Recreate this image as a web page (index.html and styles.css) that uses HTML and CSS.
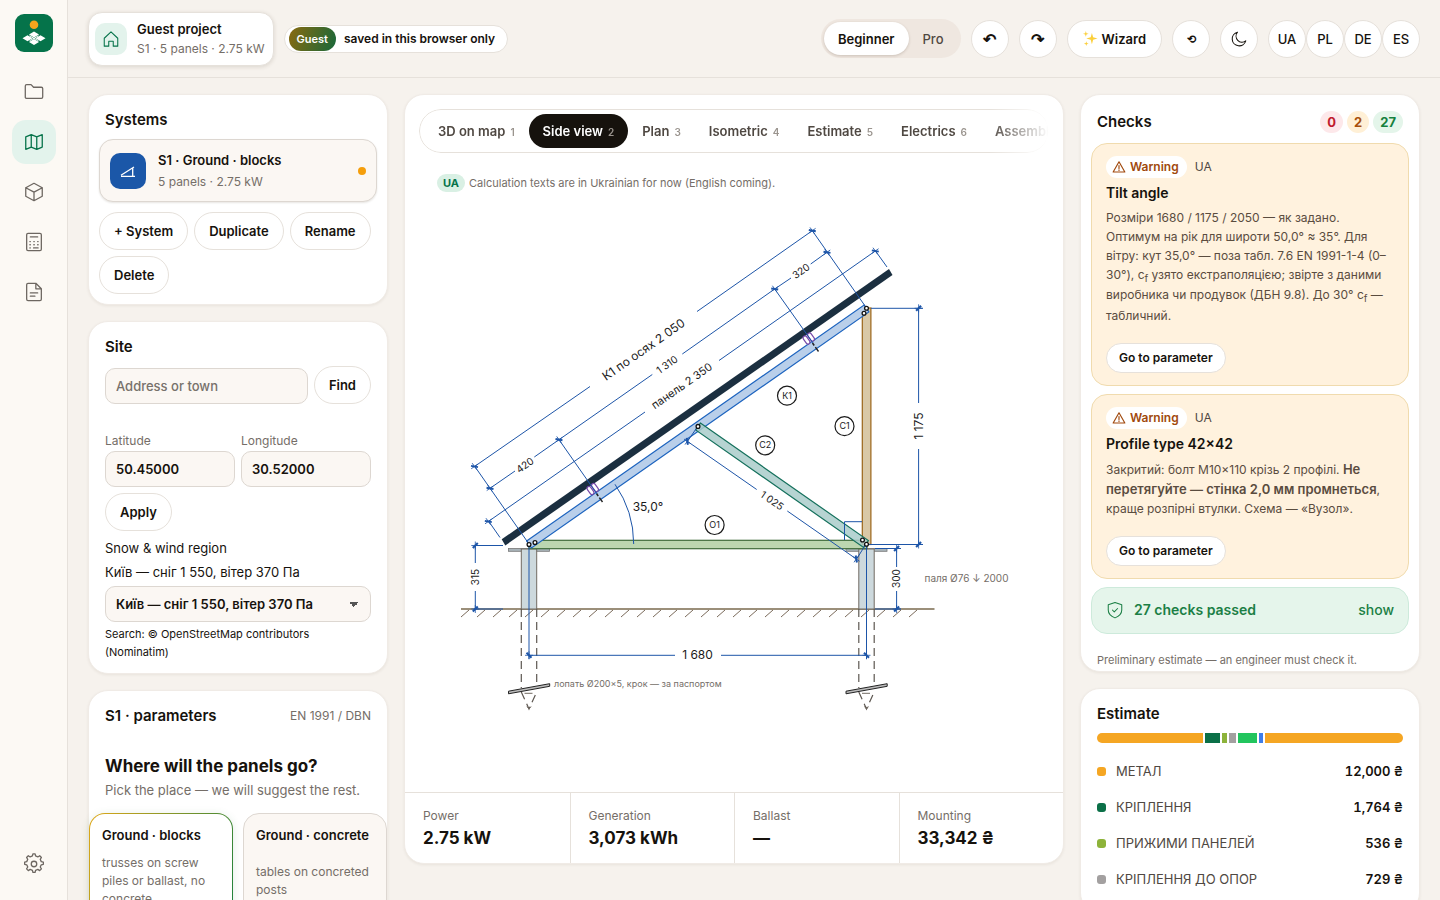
FILE: index.html
```
<!DOCTYPE html>
<html lang="en">
<head>
  <meta charset="UTF-8">
  <meta name="viewport" content="width=device-width, initial-scale=1.0">
  <title>Guest project</title>
  <link rel="stylesheet" href="styles.css">
</head>
<body>
<div class="app">

  <!-- Rail -->
  <nav class="rail" aria-label="Main">
    <a class="logo" href="#" aria-label="Home">
      <svg viewBox="0 0 38 38" width="38" height="38">
        <rect width="38" height="38" rx="9" fill="#05734a"/>
        <circle cx="19" cy="10.700" r="4.300" fill="#f5a51d"/>
        <path fill="#fff" d="M19 17.600l5 3-5 3-5-3zM12.500 21.300l5 3-5 3-5-3zM25.500 21.300l5 3-5 3-5-3zM19 25l5 3-5 3-5-3z"/>
        <path d="M14.500 21.800l9 5M23.500 21.800l-9 5" stroke="#fff" stroke-width="1"/>
      </svg>
    </a>
    <a class="rail-link" href="#" aria-label="Projects">
      <svg class="icon" viewBox="0 0 24 24"><path d="M2.500 18V5.500a1.500 1.500 0 0 1 1.500-1.500h4.800L11.500 6.800H20a1.500 1.500 0 0 1 1.500 1.500v9.200a1.500 1.500 0 0 1-1.500 1.500H4a1.500 1.500 0 0 1-1.500-1z"/></svg>
    </a>
    <a class="rail-link active" href="#" aria-label="Map">
      <svg class="icon" viewBox="0 0 24 24"><path d="M3 6.500L9 4l6 2.500L21 4v13.500L15 20l-6-2.500L3 20zM9 4v13.500M15 6.500V20"/></svg>
    </a>
    <a class="rail-link" href="#" aria-label="Model">
      <svg class="icon" viewBox="0 0 24 24"><path d="M12 2.500l9 4.800v9.400l-9 4.800-9-4.800V7.300zM3 7.300l9 4.900 9-4.900M12 12.200v9.300"/></svg>
    </a>
    <a class="rail-link" href="#" aria-label="Estimate">
      <svg class="icon" viewBox="0 0 24 24"><rect x="4" y="2.500" width="16" height="19" rx="1.500"/><path d="M8 6.500h8"/><path d="M7.500 11.500h.5M11.800 11.500h.5M16 11.500h.5M7.500 15h.5M11.800 15h.5M16 15h.5M7.500 18.500h.5M11.500 18.500h5"/></svg>
    </a>
    <a class="rail-link" href="#" aria-label="Documents">
      <svg class="icon" viewBox="0 0 24 24"><path d="M14 2.500H5.500A1.500 1.500 0 0 0 4 4v16a1.500 1.500 0 0 0 1.500 1.500h13A1.500 1.500 0 0 0 20 20V8.500zM14 2.500v6h6M8 13h8M8 16.500h5"/></svg>
    </a>
    <a class="rail-link rail-bottom" href="#" aria-label="Settings">
      <svg class="icon" viewBox="0 0 24 24"><circle cx="12" cy="12" r="3"/><path d="M10.300 3.200L10.800 1h2.400l.5 2.200 2.500 1.100 2-1.300 1.900 1.900-1.300 2 1.100 2.500 2.300.5v2.500l-2.300.5-1.100 2.400 1.300 2-1.900 1.900-2-1.300-2.500 1.100-.5 2.200h-2.400l-.5-2.200-2.500-1.100-2 1.300-1.900-1.900 1.300-2-1.100-2.400-2.300-.5V9.900l2.300-.5 1.100-2.500-1.300-2L5.800 3l2 1.300z"/></svg>
    </a>
  </nav>

  <div class="main">
    <!-- Top bar -->
    <header class="topbar">
      <button class="project">
        <span class="project-icon">
          <svg class="icon icon-m" viewBox="0 0 24 24"><path d="M3 11l9-8.500 9 8.500v10.500h-6V15H9v6.500H3z"/></svg>
        </span>
        <span class="project-text">
          <strong>Guest project</strong>
          <small>S1 · 5 panels · 2.75 kW</small>
        </span>
      </button>
      <div class="guest"><span class="guest-tag">Guest</span>saved in this browser only</div>

      <div class="tools">
        <div class="segment">
          <button class="on">Beginner</button>
          <button>Pro</button>
        </div>
        <button class="btn round arrow" aria-label="Undo">↶</button>
        <button class="btn round arrow" aria-label="Redo">↷</button>
        <button class="btn wizard">
          <svg viewBox="0 0 16 16" width="15" height="15" fill="#fbcf3b"><path d="M9.500 2l1.300 4.700L15.500 8l-4.700 1.300L9.500 14 8.200 9.300 3.500 8l4.700-1.300zM3 0l.7 2.300L6 3l-2.300.7L3 6l-.7-2.300L0 3l2.300-.7zM3.500 11l.6 1.900 1.900.6-1.900.6-.6 1.900-.6-1.900-1.900-.6 1.900-.6z"/></svg>Wizard
        </button>
        <button class="btn round tiny" aria-label="Reset view">⟲</button>
        <button class="btn round" aria-label="Dark theme">
          <svg class="icon icon-m" viewBox="0 0 24 24"><path d="M10 3A9.200 9.200 0 1 0 21 14.500 8 8 0 0 1 10 3z"/></svg>
        </button>
        <div class="langs">
          <button class="btn round">UA</button>
          <button class="btn round">PL</button>
          <button class="btn round">DE</button>
          <button class="btn round">ES</button>
        </div>
      </div>
    </header>

    <div class="columns">
      <!-- Left column -->
      <aside class="col">
        <section class="card systems">
          <h2>Systems</h2>
          <button class="system">
            <span class="system-icon">
              <svg viewBox="0 0 20 20" width="20" height="20" fill="none" stroke="#fff" stroke-width="1.300"><path d="M3 14.300L16 6M3 15.300h14M14.700 7v8"/></svg>
            </span>
            <span class="system-text">
              <strong>S1 · Ground · blocks</strong>
              <small>5 panels · 2.75 kW</small>
            </span>
            <span class="status-dot"></span>
          </button>
          <div class="actions">
            <button class="btn">+ System</button>
            <button class="btn">Duplicate</button>
            <button class="btn">Rename</button>
            <button class="btn">Delete</button>
          </div>
        </section>

        <section class="card site">
          <h2>Site</h2>
          <div class="search">
            <input class="field" type="text" placeholder="Address or town" aria-label="Address or town">
            <button class="btn">Find</button>
          </div>
          <div class="coords">
            <label>Latitude<input class="field" type="text" value="50.45000"></label>
            <label>Longitude<input class="field" type="text" value="30.52000"></label>
          </div>
          <button class="btn">Apply</button>
          <label class="region-label" for="region">Snow &amp; wind region</label>
          <p class="region-value">Київ — сніг 1 550, вітер 370 Па</p>
          <select class="field" id="region">
            <option>Київ — сніг 1 550, вітер 370 Па</option>
          </select>
          <p class="credit">Search: © OpenStreetMap contributors (Nominatim)</p>
        </section>

        <section class="card params">
          <div class="params-head"><h2>S1 · parameters</h2><span>EN 1991 / DBN</span></div>
          <h3>Where will the panels go?</h3>
          <p class="hint">Pick the place — we will suggest the rest.</p>
          <div class="places">
            <button class="place chosen"><strong>Ground · blocks</strong><span>trusses on screw piles or ballast, no concrete</span></button>
            <button class="place"><strong>Ground · concrete</strong><span>tables on concreted posts</span></button>
          </div>
        </section>
      </aside>

      <!-- Drawing -->
      <main class="card viewer">
        <div class="tabs" role="tablist">
          <button role="tab">3D on map<small>1</small></button>
          <button role="tab" class="on" aria-selected="true">Side view<small>2</small></button>
          <button role="tab">Plan<small>3</small></button>
          <button role="tab">Isometric<small>4</small></button>
          <button role="tab">Estimate<small>5</small></button>
          <button role="tab">Electrics<small>6</small></button>
          <button role="tab">Assembly<small>7</small></button>
        </div>
        <p class="note"><span class="note-tag">UA</span>Calculation texts are in Ukrainian for now (English coming).</p>

        <svg class="drawing" viewBox="405 200 658 592">
          <defs>
            <marker id="tick" viewBox="-5 -5 10 10" markerWidth="10" markerHeight="10" markerUnits="userSpaceOnUse" orient="auto">
              <path d="M-4 0H4M0-4V4" stroke="#1d55a8" stroke-width=".8"/>
              <path d="M-2.500-2.500l5 5" stroke="#1d55a8" stroke-width="2"/>
            </marker>
          </defs>

          <!-- ground -->
          <path class="ground" d="M461 609H934.500"/>
          <path class="hatch" d="M469 610l-8 7m24-7l-8 7m24-7l-8 7m24-7l-8 7m24-7l-8 7m24-7l-8 7m24-7l-8 7m24-7l-8 7m24-7l-8 7m24-7l-8 7m24-7l-8 7m24-7l-8 7m24-7l-8 7m24-7l-8 7m24-7l-8 7m24-7l-8 7m24-7l-8 7m24-7l-8 7m24-7l-8 7m24-7l-8 7m24-7l-8 7m24-7l-8 7m24-7l-8 7m24-7l-8 7m24-7l-8 7m24-7l-8 7m24-7l-8 7m24-7l-8 7m24-7l-8 7"/>

          <!-- screw piles -->
          <g id="pile">
            <rect x="508.500" y="548.500" width="41" height="2.800" fill="#a9b4ba" stroke="#777" stroke-width=".8"/>
            <rect x="521.300" y="549" width="15.400" height="60" fill="#cdd9dd" stroke="#716a62"/>
            <path class="buried" d="M521.300 609V688M536.700 609V688M521.300 692L529 709L536.700 692"/>
            <path d="M524.500 693.300h8M527 706.500l2 2.500 2-2.500" fill="none" stroke="#716a62"/>
            <path d="M508.500 691.200L549.700 683.700V686.300L508.500 693.800z" fill="#bbb" stroke="#222"/>
          </g>
          <use href="#pile" x="337.500"/>

          <!-- frame -->
          <rect x="529" y="540.300" width="338" height="8.400" fill="#bcd6b0" stroke="#3f6b3a" stroke-width="1.200"/>
          <rect x="862.300" y="308" width="8.600" height="236.500" fill="#d9c8a6" stroke="#9a6418" stroke-width="1.200"/>
          <path d="M526.600 541L864.100 305L868.900 311.900L531.400 547.900z" fill="#b9cfea" stroke="#1d64bf" stroke-width="1.200"/>
          <path d="M700.400 423.100L868.400 540.600L863.600 547.400L695.600 429.900z" fill="#a9cdca" fill-opacity=".85" stroke="#14705c" stroke-width="1.200"/>
          <path d="M501.700 539.300L889 269L892.500 275L505.300 545.500z" fill="#1b2f40"/>

          <!-- clamps -->
          <g id="clamp" fill="#fff" stroke="#7649a8" stroke-width="1.200">
            <rect x="588.500" y="486" width="4" height="9" rx="2" transform="rotate(-35 590.500 490.500)"/>
            <rect x="593" y="483" width="4" height="9" rx="2" transform="rotate(-35 595 487.500)"/>
            <path d="M596.500 493.500L602.500 502" stroke="#222" stroke-width="1.500" stroke-dasharray="3 2 5 0"/>
          </g>
          <use href="#clamp" x="216" y="-150.500"/>

          <!-- extension lines -->
          <path class="dim" d="M529 544L474.500 466M866.500 308L812.300 230.700M559 439.700L597 494M774.700 289L813 343M488.300 520.700L500 537.500M875.300 250.700L887 267M871 308.300H923M868 544.500H923M475 545.500H503M475 609H503M875 548.500H901M875 609H901M529 544V659M866.500 544V659M698 426L687 442M866 544L856 560M844.500 540V521.700H862"/>
          <path class="dim" d="M615 484.300A105 105 0 0 1 633.700 544"/>

          <!-- dimension lines -->
          <g class="dim">
            <path marker-start="url(#tick)" d="M474.500 466.500L590 386.500"/>
            <path marker-end="url(#tick)" d="M697 311.500L812.300 230.700"/>
            <path marker-start="url(#tick)" d="M490 488.300L515 471"/>
            <path marker-end="url(#tick)" d="M534.300 457L559 439.700"/>
            <path d="M559 439.700L652.300 374.500"/>
            <path marker-end="url(#tick)" d="M682.300 354L774.700 289"/>
            <path d="M774.700 289L791 278"/>
            <path marker-end="url(#tick)" d="M810.700 264L827 252.300"/>
            <path marker-start="url(#tick)" d="M488.300 521.500L645 412"/>
            <path marker-end="url(#tick)" d="M719 360.500L875.300 251"/>
            <path marker-start="url(#tick)" d="M918.600 308.300V403"/>
            <path marker-end="url(#tick)" d="M918.600 449V544.500"/>
            <path marker-start="url(#tick)" d="M475.300 545.500V563"/>
            <path marker-end="url(#tick)" d="M475.300 591V609"/>
            <path marker-start="url(#tick)" d="M896.600 548.500V567"/>
            <path marker-end="url(#tick)" d="M896.600 591V609"/>
            <path marker-start="url(#tick)" d="M529 655.300H675"/>
            <path marker-end="url(#tick)" d="M721 655.300H866.500"/>
            <path marker-start="url(#tick)" d="M687.300 441.300L756.700 489.500"/>
            <path marker-end="url(#tick)" d="M787.300 511L856.300 559"/>
          </g>

          <!-- bolts -->
          <g fill="#fff" stroke="#111" stroke-width="1.300">
            <circle cx="529" cy="544.500" r="1.900"/><circle cx="535" cy="542.500" r="1.900"/>
            <circle cx="866.500" cy="308.300" r="1.900"/><circle cx="864" cy="313.300" r="1.900"/>
            <circle cx="866.500" cy="544.300" r="1.900"/><circle cx="862.500" cy="540" r="1.900"/>
            <circle cx="698" cy="426.400" r="1.900"/>
          </g>

          <!-- part marks -->
          <g fill="#fff" stroke="#1a1a1a" stroke-width="1.200">
            <circle cx="787" cy="395.700" r="9.500"/><circle cx="844.500" cy="426.200" r="9.500"/>
            <circle cx="765.200" cy="445.300" r="9.500"/><circle cx="714.600" cy="525" r="9.500"/>
          </g>
          <g class="mark">
            <text x="787" y="399">К1</text><text x="844.500" y="429">С1</text>
            <text x="765.200" y="448">С2</text><text x="714.600" y="528">О1</text>
          </g>

          <!-- sizes -->
          <g class="size-l">
            <text transform="translate(646 353) rotate(-35)">К1 по осях 2 050</text>
            <text transform="translate(923 426) rotate(-90)">1 175</text>
            <text x="697.500" y="659">1 680</text>
            <text x="648" y="511">35,0°</text>
          </g>
          <g class="size-m">
            <text transform="translate(684 389) rotate(-35)">панель 2 350</text>
          </g>
          <g class="size-s">
            <text transform="translate(669 367.500) rotate(-35)">1 310</text>
            <text transform="translate(527 468) rotate(-35)">420</text>
            <text transform="translate(803 274) rotate(-35)">320</text>
            <text transform="translate(770 503.500) rotate(35)">1 025</text>
            <text transform="translate(479 577) rotate(-90)">315</text>
            <text transform="translate(900 578.500) rotate(-90)">300</text>
          </g>
          <text class="remark" x="924.500" y="582">паля Ø76 ↓ 2000</text>
          <text class="remark small" x="554" y="687">лопать Ø200×5, крок — за паспортом</text>
        </svg>

        <dl class="stats">
          <div><dt>Power</dt><dd>2.75 kW</dd></div>
          <div><dt>Generation</dt><dd>3,073 kWh</dd></div>
          <div><dt>Ballast</dt><dd>—</dd></div>
          <div><dt>Mounting</dt><dd>33,342 ₴</dd></div>
        </dl>
      </main>

      <!-- Right column -->
      <aside class="col">
        <section class="card checks">
          <div class="checks-head">
            <h2>Checks</h2>
            <span class="count red">0</span><span class="count amber">2</span><span class="count green">27</span>
          </div>
          <article class="warning">
            <div class="warning-head">
              <span class="warning-tag"><svg class="icon icon-s" viewBox="0 0 24 24"><path d="M12 3l10 17.500H2zM12 9.500v5M12 17v1"/></svg>Warning</span>UA
            </div>
            <h3>Tilt angle</h3>
            <p>Розміри 1680 / 1175 / 2050 — як задано. Оптимум на рік для широти 50,0° ≈ 35°. Для вітру: кут 35,0° — поза табл. 7.6 EN 1991-1-4 (0–30°), c<sub>f</sub> узято екстраполяцією; звірте з даними виробника чи продувок (ДБН 9.8). До 30° c<sub>f</sub> — табличний.</p>
            <button class="btn btn-small">Go to parameter</button>
          </article>
          <article class="warning">
            <div class="warning-head">
              <span class="warning-tag"><svg class="icon icon-s" viewBox="0 0 24 24"><path d="M12 3l10 17.500H2zM12 9.500v5M12 17v1"/></svg>Warning</span>UA
            </div>
            <h3>Profile type 42×42</h3>
            <p>Закритий: болт М10×110 крізь 2 профілі. <b>Не перетягуйте — стінка 2,0 мм промнеться</b>, краще розпірні втулки. Схема — «Вузол».</p>
            <button class="btn btn-small">Go to parameter</button>
          </article>
          <button class="passed">
            <svg class="icon icon-m" viewBox="0 0 24 24"><path d="M12 2l9 3v7c0 5-4 8.500-9 10.500C7 20.500 3 17 3 12V5zM8.500 12l2.500 2.500 4.500-4.500"/></svg>
            27 checks passed<span>show</span>
          </button>
          <p class="disclaimer">Preliminary estimate — an engineer must check it.</p>
        </section>

        <section class="card estimate">
          <h2>Estimate</h2>
          <div class="bar">
            <i class="c-metal" style="flex-grow: 106"></i>
            <i class="c-fix" style="flex-grow: 15"></i>
            <i class="c-clamp" style="flex-grow: 5"></i>
            <i class="c-support" style="flex-grow: 7"></i>
            <i class="c-cable" style="flex-grow: 19"></i>
            <i class="c-other" style="flex-grow: 4"></i>
            <i class="c-metal" style="flex-grow: 138"></i>
          </div>
          <ul>
            <li><i class="c-metal"></i>МЕТАЛ<b>12,000 ₴</b></li>
            <li><i class="c-fix"></i>КРІПЛЕННЯ<b>1,764 ₴</b></li>
            <li><i class="c-clamp"></i>ПРИЖИМИ ПАНЕЛЕЙ<b>536 ₴</b></li>
            <li><i class="c-support"></i>КРІПЛЕННЯ ДО ОПОР<b>729 ₴</b></li>
          </ul>
        </section>
      </aside>
    </div>
  </div>
</div>
</body>
</html>
```

FILE: styles.css
```
:root {
  --bg: #f6f2ed;
  --rail: #fcf9f4;
  --card: #ffffff;
  --soft: #fbf7f3;
  --ink: #16120d;
  --ink-2: #4f4842;
  --muted: #756e68;
  --border: #e6e1db;
  --green: #06734a;
  --mint: #e3f3ec;
  --amber: #f5a623;
}

* {
  box-sizing: border-box;
}

body {
  margin: 0;
  background: var(--bg);
  color: var(--ink);
  font-family: Inter, "Noto Sans", sans-serif;
  font-size: 13px;
  line-height: 18px;
}

h2, h3, p, dl, dd, ul {
  margin: 0;
  padding: 0;
}

button, input, select {
  font: inherit;
  color: inherit;
}

button {
  cursor: pointer;
}

h2 {
  font-size: 15px;
  line-height: 20px;
  font-weight: 600;
}

strong {
  font-weight: 600;
}

.app {
  display: flex;
  height: 100vh;
  overflow: hidden;
}

.icon {
  width: 22px;
  height: 22px;
  fill: none;
  stroke: currentColor;
  stroke-width: 1.4;
  stroke-linejoin: round;
  stroke-linecap: round;
}

.icon-m {
  width: 18px;
  height: 18px;
}

.icon-s {
  width: 14px;
  height: 14px;
  stroke-width: 2;
}

/* Rail */
.rail {
  width: 68px;
  flex: none;
  display: flex;
  flex-direction: column;
  align-items: center;
  gap: 6px;
  padding: 14px 0;
  background: var(--rail);
  border-right: 1px solid var(--border);
}

.logo {
  height: 50px;
}

.rail-link {
  width: 44px;
  height: 44px;
  display: flex;
  align-items: center;
  justify-content: center;
  border-radius: 14px;
  color: #6d6761;
}

.rail-link.active {
  background: var(--mint);
  color: var(--green);
}

.rail-bottom {
  margin-top: auto;
}

.main {
  flex: 1;
  min-width: 0;
  display: flex;
  flex-direction: column;
}

/* Top bar */
.topbar {
  height: 78px;
  flex: none;
  display: flex;
  align-items: center;
  padding: 0 20px;
  gap: 10px;
  border-bottom: 1px solid var(--border);
}

.project {
  display: flex;
  align-items: center;
  gap: 10px;
  height: 54px;
  padding: 0 8px 0 6px;
  border: 1px solid var(--border);
  border-radius: 14px;
  background: var(--card);
  box-shadow: 0 1px 4px rgba(60, 40, 20, .14);
  text-align: left;
}

.project-icon {
  width: 32px;
  height: 32px;
  display: flex;
  align-items: center;
  justify-content: center;
  border-radius: 10px;
  background: var(--mint);
  color: var(--green);
}

.project-text, .system-text {
  display: flex;
  flex-direction: column;
}

.project small, .system small {
  font-size: 12px;
  color: var(--muted);
}

.project-text {
  line-height: 19px;
}

.guest {
  display: flex;
  align-items: center;
  gap: 8px;
  height: 28px;
  padding: 0 12px 0 4px;
  border: 1px solid var(--border);
  border-radius: 14px;
  background: var(--card);
  font-size: 12px;
  font-weight: 600;
}

.guest-tag {
  padding: 3px 8px;
  border-radius: 12px;
  background: linear-gradient(110deg, #8a6a10, #17683a);
  color: #fff;
  font-size: 11px;
}

.tools {
  margin-left: auto;
  display: flex;
  align-items: center;
  gap: 10px;
}

.segment {
  display: flex;
  padding: 3px;
  border-radius: 20px;
  background: #efe7e0;
}

.segment button {
  height: 33px;
  padding: 0 14px;
  border: 0;
  border-radius: 17px;
  background: none;
  font-size: 13px;
  font-weight: 500;
  color: var(--ink-2);
}

.segment .on {
  background: var(--card);
  color: var(--ink);
  font-weight: 600;
  box-shadow: 0 1px 3px rgba(60, 40, 20, .2);
}

.btn {
  height: 38px;
  padding: 0 14px;
  border: 1px solid var(--border);
  border-radius: 19px;
  background: var(--card);
  font-size: 13px;
  font-weight: 600;
  white-space: nowrap;
}

.round {
  width: 38px;
  padding: 0;
  display: inline-flex;
  align-items: center;
  justify-content: center;
}

.arrow {
  font-size: 16px;
}

.tiny {
  font-size: 11px;
}

.wizard {
  display: flex;
  align-items: center;
  gap: 4px;
  padding: 0 15px;
}

.langs {
  display: flex;
}

.langs .btn {
  font-weight: 500;
}

/* Columns */
.columns {
  flex: 1;
  min-height: 0;
  display: grid;
  grid-template-columns: 300px minmax(0, 1fr) 340px;
  gap: 16px;
  padding: 16px 20px 0;
}

.col {
  display: flex;
  flex-direction: column;
  gap: 16px;
  min-height: 0;
  overflow: visible;
}

.card {
  flex: none;
  border: 1px solid #f0ebe6;
  border-radius: 20px;
  background: var(--card);
  box-shadow: 0 1px 3px rgba(60, 40, 20, .07);
}

.systems {
  padding: 15px 10px 10px;
}

.systems h2 {
  padding: 0 6px;
}

.system {
  width: 100%;
  display: flex;
  align-items: center;
  gap: 12px;
  height: 63px;
  margin: 9px 0 10px;
  padding: 0 10px;
  border: 1px solid #ddd7d1;
  border-radius: 14px;
  background: var(--soft);
  box-shadow: 0 1px 2px rgba(60, 40, 20, .12);
  text-align: left;
}

.system-icon {
  width: 36px;
  height: 36px;
  display: flex;
  align-items: center;
  justify-content: center;
  border-radius: 10px;
  background: #1b57a8;
}

.system-text {
  gap: 4px;
}

.status-dot {
  width: 8px;
  height: 8px;
  margin-left: auto;
  border-radius: 50%;
  background: #f59e0b;
}

.actions {
  display: flex;
  flex-wrap: wrap;
  gap: 6px;
}

/* Site */
.site {
  padding: 15px 16px 12px;
}

.field {
  width: 100%;
  height: 36px;
  padding: 0 10px;
  border: 1px solid #ddd7d1;
  border-radius: 10px;
  background: var(--soft);
  font-size: 13px;
  font-weight: 600;
}

.field::placeholder {
  color: #77716b;
  font-weight: 500;
}

.search {
  display: flex;
  align-items: flex-end;
  gap: 6px;
  margin: 9px 0 27px;
}

.coords {
  display: flex;
  gap: 6px;
  margin-bottom: 6px;
}

.coords label {
  flex: 1;
  font-size: 12px;
  line-height: 20px;
  color: var(--muted);
}

.coords .field {
  color: var(--ink);
}

.region-label {
  display: block;
  margin: 8px 0 6px;
}

.region-value {
  margin-bottom: 5px;
}

select.field {
  appearance: none;
  background-image: linear-gradient(45deg, transparent 50%, #555 50%), linear-gradient(-45deg, transparent 50%, #555 50%);
  background-size: 5px 5px;
  background-position: right 16px center, right 11px center;
  background-repeat: no-repeat;
}

.credit {
  margin-top: 3px;
  font-size: 11px;
}

/* Parameters */
.params-head {
  display: flex;
  align-items: center;
  justify-content: space-between;
  padding: 15px 16px 0;
}

.params-head span {
  font-size: 12px;
  color: var(--muted);
}

.params h3 {
  margin: 28px 16px 0;
  font-size: 17px;
  line-height: 24px;
}

.hint {
  margin: 3px 16px 14px;
  color: var(--muted);
}

.places {
  display: grid;
  grid-template-columns: 1fr 1fr;
  gap: 10px;
}

.place {
  display: flex;
  flex-direction: column;
  height: 118px;
  padding: 12px;
  border: 1px solid #ddd7d1;
  border-radius: 16px;
  background: var(--soft);
  text-align: left;
}

.place strong {
  white-space: nowrap;
}

.place span {
  margin-top: 10px;
  height: 54px;
  display: flex;
  align-items: center;
  font-size: 12px;
  color: var(--muted);
}

.place.chosen {
  border-color: transparent;
  background: linear-gradient(#fff, #fff) padding-box, linear-gradient(110deg, #e0a818, #17803f) border-box;
  box-shadow: 0 2px 10px rgba(40, 110, 60, .14);
}

/* Viewer */
.viewer {
  display: flex;
  flex-direction: column;
  min-width: 0;
  height: calc(100% - 36px);
  overflow: hidden;
}

.tabs {
  display: flex;
  flex: none;
  margin: 14px 14px 0;
  padding: 4px;
  border: 1px solid var(--border);
  border-radius: 22px;
  overflow: hidden;
  -webkit-mask-image: linear-gradient(90deg, #000 calc(100% - 60px), transparent);
  mask-image: linear-gradient(90deg, #000 calc(100% - 60px), transparent);
}

.tabs button {
  flex: none;
  height: 34px;
  padding: 0 14px;
  border: 0;
  border-radius: 17px;
  background: none;
  font-size: 13px;
  font-weight: 600;
  color: var(--ink-2);
}

.tabs small {
  margin-left: 5px;
  font-size: 10px;
  color: #9a948e;
}

.tabs .on {
  background: var(--ink);
  color: #fff;
}

.note {
  flex: none;
  margin: 21px 32px 8px;
  font-size: 11px;
  color: var(--muted);
}

.note-tag {
  margin-right: 4px;
  padding: 2px 6px;
  border-radius: 9px;
  background: #d9f0e4;
  color: var(--green);
  font-weight: 700;
}

.drawing {
  flex: 1;
  min-height: 0;
  width: 100%;
}

.dim {
  fill: none;
  stroke: #1d55a8;
  stroke-width: 1;
}

.ground {
  stroke: #7a6a4e;
  stroke-width: 1.6;
}

.hatch {
  fill: none;
  stroke: #7a6a5a;
  stroke-width: 1;
}

.buried {
  fill: none;
  stroke: #5d5751;
  stroke-width: 1.2;
  stroke-dasharray: 8 5;
}

.mark, .size-l, .size-m, .size-s {
  fill: #1a1a1a;
  text-anchor: middle;
}

.mark {
  font-size: 9px;
}

.size-l {
  font-size: 12px;
}

.size-m {
  font-size: 11px;
}

.size-s {
  font-size: 10px;
}

.remark {
  font-size: 10px;
  fill: var(--muted);
}

.remark.small {
  font-size: 9px;
}

.stats {
  flex: none;
  display: grid;
  grid-template-columns: repeat(4, 1fr);
  border-top: 1px solid var(--border);
}

.stats div {
  padding: 14px 18px 12px;
}

.stats div + div {
  border-left: 1px solid var(--border);
}

.stats dt {
  font-size: 12px;
  color: var(--muted);
}

.stats dd {
  font-size: 17px;
  line-height: 26px;
  font-weight: 700;
}

/* Checks */
.checks {
  height: 578px;
  padding: 16px 10px 0;
  overflow: hidden;
}

.checks-head {
  display: flex;
  align-items: center;
  gap: 4px;
  padding: 0 6px;
  margin-bottom: 10px;
}

.checks-head h2 {
  margin-right: auto;
}

.count {
  padding: 2px 7px;
  border-radius: 11px;
  font-weight: 700;
}

.red {
  background: #fde8ea;
  color: #c01b2e;
}

.amber {
  background: #fff0d6;
  color: #a8500c;
}

.green {
  background: #e4f5ea;
  color: #15803d;
}

.warning {
  margin-bottom: 8px;
  padding: 12px 14px;
  border: 1px solid #f0dbae;
  border-radius: 16px;
  background: #fff2de;
}

.warning-head {
  display: flex;
  align-items: center;
  gap: 8px;
  font-size: 12px;
  color: var(--ink-2);
}

.warning-tag {
  display: flex;
  align-items: center;
  gap: 4px;
  height: 22px;
  padding: 0 8px 0 6px;
  border-radius: 11px;
  background: #fff;
  font-weight: 600;
  color: #a1490d;
}

.warning h3 {
  margin: 5px 0;
  font-size: 14px;
  line-height: 20px;
  font-weight: 600;
}

.warning p {
  margin-bottom: 18px;
  font-size: 12px;
  line-height: 19px;
  color: #5a4c3f;
}

.warning sub {
  font-size: 10px;
  line-height: 14px;
}

.warning b {
  font-size: 13px;
  line-height: 20px;
  font-weight: 600;
}

.btn-small {
  height: 30px;
  padding: 0 12px;
  font-size: 12px;
}

.passed {
  width: 100%;
  height: 47px;
  display: flex;
  align-items: center;
  gap: 10px;
  padding: 0 14px;
  border: 1px solid #cdeadb;
  border-radius: 16px;
  background: #e5f5eb;
  color: #1b7f45;
  font-size: 14px;
  font-weight: 600;
}

.passed span {
  margin-left: auto;
  font-weight: 500;
}

.disclaimer {
  margin: 17px 6px 0;
  font-size: 11px;
  color: var(--muted);
}

/* Estimate */
.estimate {
  padding: 15px 16px;
}

.bar {
  display: flex;
  gap: 2px;
  height: 10px;
  margin: 9px 0 10px;
  border-radius: 5px;
  overflow: hidden;
}

.bar i {
  flex-basis: 0;
}

.estimate ul {
  list-style: none;
}

.estimate li {
  display: flex;
  align-items: center;
  height: 36px;
  gap: 10px;
  font-size: 13px;
  color: var(--ink-2);
}

.estimate li i {
  width: 9px;
  height: 9px;
  border-radius: 3px;
}

.estimate li b {
  margin-left: auto;
  color: var(--ink);
  font-weight: 600;
  font-variant-numeric: tabular-nums;
}

.c-metal {
  background: var(--amber);
}

.c-fix {
  background: #0b7048;
}

.c-clamp {
  background: #8db33a;
}

.c-support {
  background: #a3a0a0;
}

.c-cable {
  background: #22c55e;
}

.c-other {
  background: #3f7de8;
}
```
